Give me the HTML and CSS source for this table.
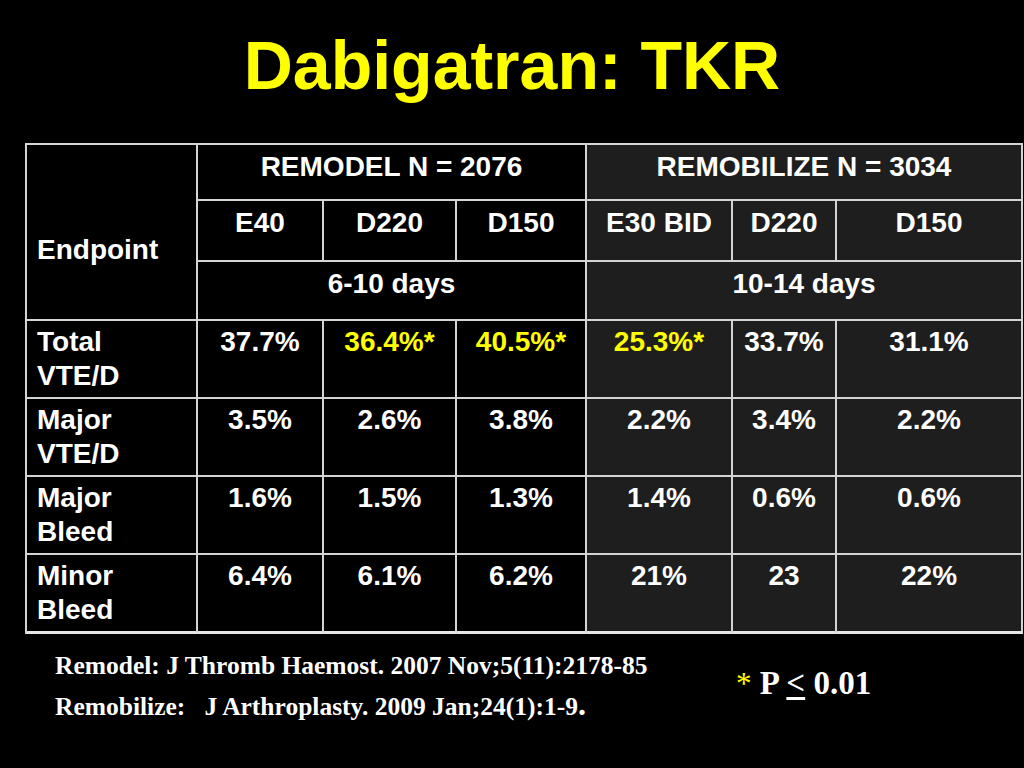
FILE: index.html
```html
<!DOCTYPE html>
<html lang="en">
<head>
<meta charset="utf-8">
<title>Dabigatran: TKR</title>
<link rel="stylesheet" href="styles.css">
</head>
<body>
<div class="slide">
  <h1 class="title">Dabigatran: TKR</h1>
  <table class="data">
    <colgroup>
      <col class="c1"><col class="c2"><col class="c3"><col class="c4"><col class="c5"><col class="c6"><col class="c7">
    </colgroup>
    <tr class="r1">
      <td class="lab endpoint" rowspan="3">Endpoint</td>
      <td colspan="3">REMODEL N = 2076</td>
      <td colspan="3" class="g">REMOBILIZE N = 3034</td>
    </tr>
    <tr class="r2">
      <td>E40</td><td>D220</td><td>D150</td>
      <td class="g">E30 BID</td><td class="g">D220</td><td class="g">D150</td>
    </tr>
    <tr class="r3">
      <td colspan="3">6-10 days</td>
      <td colspan="3" class="g">10-14 days</td>
    </tr>
    <tr class="rd">
      <td class="lab">Total<br>VTE/D</td>
      <td>37.7%</td><td class="y">36.4%*</td><td class="y">40.5%*</td>
      <td class="g y">25.3%*</td><td class="g">33.7%</td><td class="g">31.1%</td>
    </tr>
    <tr class="rd">
      <td class="lab">Major<br>VTE/D</td>
      <td>3.5%</td><td>2.6%</td><td>3.8%</td>
      <td class="g">2.2%</td><td class="g">3.4%</td><td class="g">2.2%</td>
    </tr>
    <tr class="rd">
      <td class="lab">Major<br>Bleed</td>
      <td>1.6%</td><td>1.5%</td><td>1.3%</td>
      <td class="g">1.4%</td><td class="g">0.6%</td><td class="g">0.6%</td>
    </tr>
    <tr class="rd last">
      <td class="lab">Minor<br>Bleed</td>
      <td>6.4%</td><td>6.1%</td><td>6.2%</td>
      <td class="g">21%</td><td class="g">23</td><td class="g">22%</td>
    </tr>
  </table>
  <div class="footer">
    <div class="refs">
      <div class="ref">Remodel: J Thromb Haemost. 2007 Nov;5(11):2178-85</div>
      <div class="ref">Remobilize:   J Arthroplasty. 2009 Jan;24(1):1-9<span class="dot">.</span></div>
    </div>
    <div class="pval"><span class="star">*</span> P <span class="ul">&lt;</span> 0.01</div>
  </div>
</div>
</body>
</html>
```
FILE: styles.css
```css
html, body {
  margin: 0;
  padding: 0;
  background: #000;
}
.slide {
  width: 1024px;
  height: 768px;
  background: #000;
  overflow: hidden;
}
.title {
  margin: 0;
  padding-top: 25px;
  height: 80px;
  line-height: 80px;
  text-align: center;
  font-family: "Liberation Sans", Arial, sans-serif;
  font-weight: bold;
  font-size: 68px;
  color: #ffff00;
}
.data {
  margin: 38px 0 0 25px;
  width: 998px;
  table-layout: fixed;
  border-collapse: separate;
  border-spacing: 0;
  border-left: 2px solid #d4d4d4;
  border-top: 2px solid #d4d4d4;
  font-family: "Liberation Sans", Arial, sans-serif;
  font-weight: bold;
  font-size: 28px;
  line-height: 34px;
  color: #fff;
}
.c1 { width: 171px; }
.c2 { width: 126px; }
.c3 { width: 133px; }
.c4 { width: 130px; }
.c5 { width: 146px; }
.c6 { width: 104px; }
.c7 { width: 186px; }
.data td {
  border-right: 2px solid #d4d4d4;
  border-bottom: 2px solid #d4d4d4;
  padding: 5px 2px 0;
  vertical-align: top;
  text-align: center;
  background: #000;
  white-space: nowrap;
}
.r1 { height: 56px; }
.r2 { height: 61px; }
.r3 { height: 59px; }
.rd { height: 78px; }
.rd.last { height: 79px; }
.rd td { padding-top: 4px; }
.data td.g { background: #1e1e1e; }
.data td.y { color: #ffff00; }
.data td.lab {
  text-align: left;
  padding-left: 10px;
}
.data td.endpoint {
  vertical-align: middle;
  padding-top: 40px;
  padding-bottom: 4px;
}
.data .last td { border-bottom: 3px solid #e6e6e6; }
.footer {
  display: flex;
  margin-top: 12px;
  padding-left: 55px;
  font-family: "Liberation Serif", "Times New Roman", serif;
  font-weight: bold;
  color: #fff;
}
.refs {
  width: 681px;
}
.ref {
  font-size: 25.5px;
  line-height: 39px;
  white-space: pre;
}
.dot {
  font-size: 32px;
}
.pval {
  margin-top: 18px;
  font-size: 33px;
  line-height: 38px;
  white-space: nowrap;
}
.star {
  color: #ffff00;
  font-size: 31px;
  font-weight: normal;
}
.ul {
  text-decoration: underline;
  text-underline-offset: 3px;
}
```
